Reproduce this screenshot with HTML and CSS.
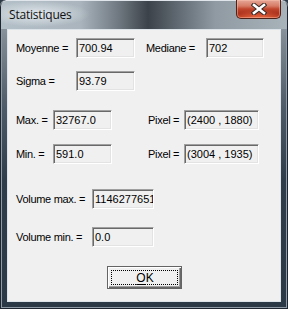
FILE: index.html
```html
<!DOCTYPE html>
<html>
<head>
<meta charset="utf-8">
<link rel="stylesheet" href="styles.css">
</head>
<body>
<div class="window">
  <div class="titlebar">
    <span class="title">Statistiques</span>
    <div class="close">
      <svg width="16" height="12" viewBox="0 0 16 12">
        <path d="M3 2 L13 10 M13 2 L3 10" stroke="#3a2a26" stroke-width="4.6" stroke-linecap="square" fill="none"/>
        <path d="M3 2 L13 10 M13 2 L3 10" stroke="#ffffff" stroke-width="2.6" stroke-linecap="square" fill="none"/>
      </svg>
    </div>
  </div>
  <div class="client">
    <div class="row r1">
      <span class="lbl w60">Moyenne =</span><span class="box w59">700.94</span>
      <span class="lbl w60 ml11">Mediane =</span><span class="box w58">702</span>
    </div>
    <div class="row r2">
      <span class="lbl w60">Sigma =</span><span class="box w59">93.79</span>
    </div>
    <div class="row r3">
      <span class="lbl w37">Max. =</span><span class="box w59">32767.0</span>
      <span class="lbl w36 ml36">Pixel =</span><span class="box w75">(2400 , 1880)</span>
    </div>
    <div class="row r4">
      <span class="lbl w37">Min. =</span><span class="box w59">591.0</span>
      <span class="lbl w36 ml36">Pixel =</span><span class="box w75">(3004 , 1935)</span>
    </div>
    <div class="row r5">
      <span class="lbl w76">Volume max. =</span><span class="box w62">1146277651</span>
    </div>
    <div class="row r6">
      <span class="lbl w76">Volume min. =</span><span class="box w62">0.0</span>
    </div>
    <div class="btnrow">
      <div class="btn"><div class="focus"><span class="u">O</span>K</div></div>
    </div>
  </div>
</div>
</body>
</html>
```
FILE: styles.css
```css
html, body {
  margin: 0;
  padding: 0;
  background: #2c3947;
}
.window {
  width: 288px;
  height: 309px;
  box-sizing: border-box;
  padding: 0 7px 7px 7px;
  display: flex;
  flex-direction: column;
  background: linear-gradient(to bottom, #a3adb4 0px, #7d8891 40px, #4c5966 110px, #2f3c4a 180px, #2b3846 309px);
  border-radius: 6px 6px 0 0;
  box-shadow: inset 0 0 0 1px #1d2630, inset 0 0 0 2px #8e9ba6;
  position: relative;
  overflow: hidden;
}
.titlebar {
  height: 29px;
  flex: none;
  display: flex;
  align-items: flex-start;
  margin: 0 -7px;
  padding: 0 8px 0 8px;
  background:
    radial-gradient(ellipse 52px 13px at 38px 14px, rgba(235,240,244,0.85), rgba(235,240,244,0) 100%),
    linear-gradient(to right, #b4c0c8 0px, #aab5bd 80px, #6d767e 120px, #3c4249 148px, #5d666e 175px, #8f9aa2 215px, #a9b3ba 288px);
  border-radius: 6px 6px 0 0;
  box-shadow: inset 0 1px 0 #dfe5ea, inset 1px 0 0 #1d2630, inset -1px 0 0 #1d2630;
}
.title {
  font-family: "Open Sans", "Noto Sans", sans-serif;
  font-size: 12px;
  color: #111;
  line-height: 14px;
  margin-top: 8px;
  margin-left: 1px;
  letter-spacing: -0.2px;
}
.close {
  margin-left: auto;
  margin-right: -1px;
  width: 45px;
  height: 19px;
  box-sizing: border-box;
  border: 1px solid #4d2219;
  border-top: none;
  border-radius: 0 0 5px 5px;
  background:
    radial-gradient(ellipse 26px 8px at 50% 100%, rgba(240,110,70,0.9), rgba(240,110,70,0) 100%),
    linear-gradient(to bottom, #e6a797 0px, #d77c66 6px, #c0452c 9px, #a82f1a 14px, #b8391f 18px);
  box-shadow: inset 0 0 0 1px rgba(255,200,180,0.45);
  display: flex;
  align-items: center;
  justify-content: center;
}
.close svg { display: block; margin-top: -1px; }
.client {
  flex: 1;
  background: #f0f0f0;
  border: 1px solid #dde4e9;
  display: flex;
  flex-direction: column;
  padding: 8px 0 0 8px;
  font-family: "Liberation Sans", Arial, sans-serif;
  font-size: 11px;
  color: #000;
}
.row {
  display: flex;
  height: 20px;
  align-items: stretch;
}
.r2 { margin-top: 13px; }
.r3 { margin-top: 19px; }
.r4 { margin-top: 14px; }
.r5 { margin-top: 25px; }
.r6 { margin-top: 18px; }
.lbl {
  line-height: 20px;
  white-space: nowrap;
  flex: none;
  letter-spacing: -0.3px;
}
.box {
  flex: none;
  box-sizing: border-box;
  height: 20px;
  border: 1px solid;
  border-color: #a0a0a0 #ffffff #ffffff #a0a0a0;
  box-shadow: inset 1px 1px 0 #696969, inset -1px -1px 0 #e3e3e3;
  background: #f0f0f0;
  padding: 0 0 0 2px;
  line-height: 18px;
  white-space: nowrap;
  overflow: hidden;
}
.w36 { width: 36px; }
.w37 { width: 37px; }
.w58 { width: 58px; }
.w59 { width: 59px; }
.w60 { width: 60px; }
.w62 { width: 62px; }
.w75 { width: 75px; }
.w76 { width: 76px; }
.ml11 { margin-left: 11px; }
.ml36 { margin-left: 36px; }
.btnrow {
  margin-top: 19px;
  padding-left: 91px;
  display: flex;
}
.btn {
  width: 75px;
  height: 23px;
  box-sizing: border-box;
  border: 1px solid #646464;
  background: #f0f0f0;
  box-shadow: inset 1px 1px 0 #ffffff, inset -1px -1px 0 #696969, inset -2px -2px 0 #a0a0a0;
  padding: 3px;
}
.focus {
  height: 100%;
  box-sizing: border-box;
  border: 1px dotted #000;
  display: flex;
  align-items: center;
  justify-content: center;
  font-size: 12px;
  padding-left: 1px;
}
.u { text-decoration: underline; text-underline-offset: 2px; }
```
